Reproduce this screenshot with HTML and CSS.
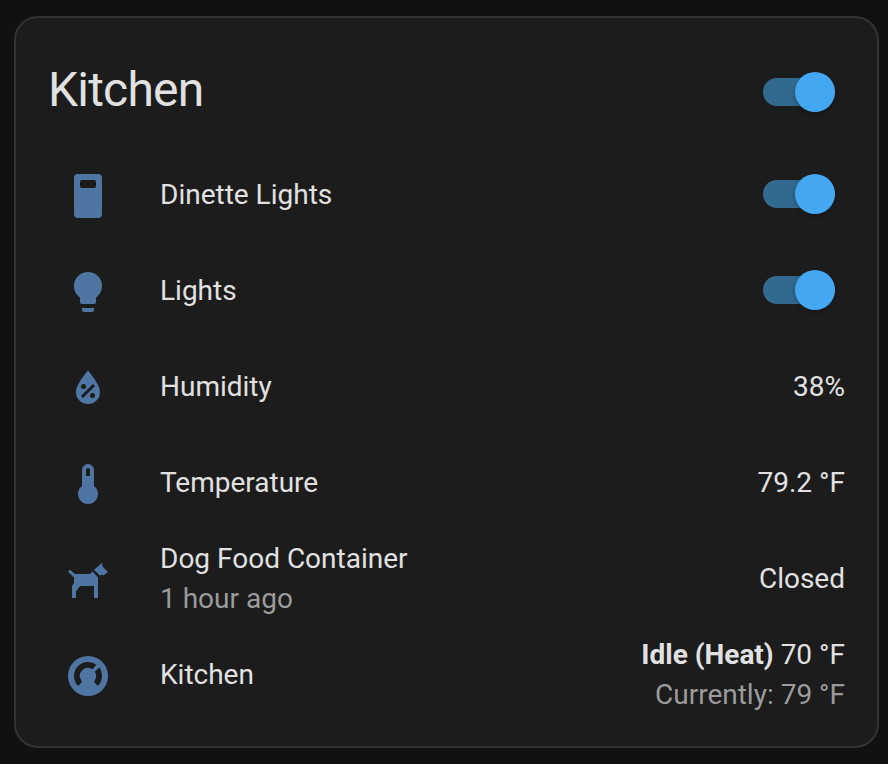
FILE: index.html
```html
<!DOCTYPE html>
<html lang="en">
<head>
<meta charset="utf-8">
<title>Kitchen</title>
<link rel="stylesheet" href="styles.css">
</head>
<body>
<main class="card">
  <header class="card-header">
    <h1 class="title">Kitchen</h1>
    <span class="switch" role="switch" aria-checked="true"><span class="thumb"></span></span>
  </header>
  <div class="row">
    <svg class="icon" viewBox="0 0 24 24"><path fill-rule="evenodd" d="M7 1H17A2 2 0 0 1 19 3V21A2 2 0 0 1 17 23H7A2 2 0 0 1 5 21V3A2 2 0 0 1 7 1M9 4A1 1 0 0 0 8 5V7A1 1 0 0 0 9 8H15A1 1 0 0 0 16 7V5A1 1 0 0 0 15 4Z"/></svg>
    <div class="name">Dinette Lights</div>
    <span class="switch" role="switch" aria-checked="true"><span class="thumb"></span></span>
  </div>
  <div class="row">
    <svg class="icon" viewBox="0 0 24 24"><path d="M12,2A7,7 0 0,0 5,9C5,11.38 6.19,13.47 8,14.74V17A1,1 0 0,0 9,18H15A1,1 0 0,0 16,17V14.74C17.81,13.47 19,11.38 19,9A7,7 0 0,0 12,2M9,21A1,1 0 0,0 10,22H14A1,1 0 0,0 15,21V20H9V21Z"/></svg>
    <div class="name">Lights</div>
    <span class="switch" role="switch" aria-checked="true"><span class="thumb"></span></span>
  </div>
  <div class="row">
    <svg class="icon" viewBox="0 0 24 24"><path fill-rule="evenodd" d="M12,3.25C12,3.25 6,10 6,14C6,17.32 8.69,20 12,20A6,6 0 0,0 18,14C18,10 12,3.25 12,3.25M14.47,9.97L15.53,11.03L9.53,17.03L8.47,15.97M9.75,10A1.25,1.25 0 0,1 11,11.25A1.25,1.25 0 0,1 9.75,12.5A1.25,1.25 0 0,1 8.5,11.25A1.25,1.25 0 0,1 9.75,10M14.25,14.5A1.25,1.25 0 0,1 15.5,15.75A1.25,1.25 0 0,1 14.25,17A1.25,1.25 0 0,1 13,15.75A1.25,1.25 0 0,1 14.25,14.5Z"/></svg>
    <div class="name">Humidity</div>
    <div class="state">38%</div>
  </div>
  <div class="row">
    <svg class="icon" viewBox="0 0 24 24"><path fill-rule="evenodd" d="M15 13V5A3 3 0 0 0 9 5V13A5 5 0 1 0 15 13M12 4A1 1 0 0 1 13 5V8H11V5A1 1 0 0 1 12 4Z"/></svg>
    <div class="name">Temperature</div>
    <div class="state">79.2 °F</div>
  </div>
  <div class="row">
    <svg class="icon" viewBox="0 0 24 24"><path d="M18.8 3L18.4 4L15 6.9L18 9.9L18.8 9.2L19.8 9.7L20.5 9.1L22 8L20 6L19.3 5.2ZM14.2 7.8L13 9H5.5L3 6.9L2 7.9L5 10.7V13.5L4 15V21H6V17.8L8 15H15V21H17V10.7Z"/></svg>
    <div class="name">Dog Food Container<div class="secondary">1 hour ago</div></div>
    <div class="state">Closed</div>
  </div>
  <div class="row">
    <svg class="icon" viewBox="0 0 24 24"><path fill-rule="evenodd" d="M12 2A10 10 0 1 0 12 22A10 10 0 1 0 12 2M7.05 16.95A7 7 0 0 1 16.2 6.4L14.1 8.6A4 4 0 0 0 8.5 14L9 15ZM16.95 16.95A7 7 0 0 0 17.6 7.8L15.4 9.9A4 4 0 0 1 15.5 14L15 15Z"/></svg>
    <div class="name">Kitchen</div>
    <div class="state"><strong>Idle (Heat)</strong> 70 °F<div class="secondary">Currently: 79 °F</div></div>
  </div>
</main>
</body>
</html>
```
FILE: styles.css
```css
* {
  box-sizing: border-box;
}

body {
  margin: 0;
  padding: 16px 9px 16px 14px;
  height: 764px;
  background: #111111;
  color: #e1e1e1;
  font: 28px/40px Roboto, sans-serif;
}

.card {
  height: 732px;
  padding: 34px 32px 22px;
  border: 2px solid #333333;
  border-radius: 24px;
  background: #1c1c1c;
}

.card-header {
  display: flex;
  align-items: center;
  justify-content: space-between;
  height: 80px;
  margin-bottom: 24px;
}

.title {
  margin: 0 0 4px;
  font-size: 48px;
  font-weight: 400;
  line-height: 76px;
  letter-spacing: -0.8px;
}

.row {
  display: flex;
  align-items: center;
  height: 80px;
  margin-bottom: 16px;
  padding-left: 16px;
}

.row .switch {
  margin-bottom: 4px;
}

.icon {
  flex: none;
  width: 48px;
  height: 48px;
  fill: #4f76a3;
}

.name {
  flex: 1;
  margin: 0 16px 2px 48px;
}

.state {
  margin-bottom: 2px;
  text-align: right;
}

.secondary {
  color: #9b9b9b;
}

.switch {
  display: flex;
  flex: none;
  align-items: center;
  justify-content: flex-end;
  width: 72px;
  height: 28px;
  margin-right: 10px;
  border-radius: 14px;
  background: #31698f;
}

.thumb {
  width: 40px;
  height: 40px;
  flex: none;
  border-radius: 50%;
  background: #44a7f2;
  box-shadow: 0 2px 4px rgba(0, 0, 0, 0.3);
}
```
